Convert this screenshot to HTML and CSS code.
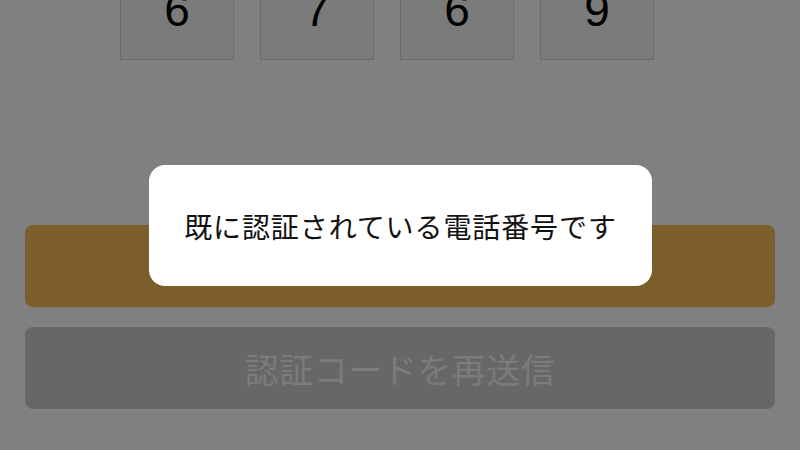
FILE: index.html
```html
<!DOCTYPE html>
<html lang="ja">
<head>
<meta charset="utf-8">
<link rel="stylesheet" href="styles.css">
</head>
<body>
<div class="screen">
  <div class="code-row">
    <div class="code-box">6</div>
    <div class="code-box">7</div>
    <div class="code-box">6</div>
    <div class="code-box">9</div>
  </div>
  <div class="actions">
    <div class="btn btn-primary"></div>
    <div class="btn btn-secondary">認証コードを再送信</div>
  </div>
  <div class="toast">既に認証されている電話番号です</div>
</div>
</body>
</html>
```
FILE: styles.css
```css
html, body {
  margin: 0;
  padding: 0;
  background: #808080;
}
.screen {
  position: relative;
  width: 800px;
  height: 450px;
  overflow: hidden;
  font-family: "Noto Sans CJK JP", "Noto Sans", sans-serif;
}
.code-row {
  display: flex;
  gap: 26px;
  padding-left: 120px;
  margin-top: -21px;
}
.code-box {
  width: 112px;
  height: 59px;
  padding-bottom: 20px;
  border: 1px solid #6c6c6c;
  background: #7b7b7b;
  display: flex;
  align-items: center;
  justify-content: center;
  font-family: "Liberation Sans", Arial, sans-serif;
  font-size: 46px;
  color: #000;
  line-height: 1;
}
.actions {
  display: flex;
  flex-direction: column;
  gap: 20px;
  margin: 165px 25px 0;
}
.btn {
  height: 82px;
  border-radius: 8px;
  display: flex;
  align-items: center;
  justify-content: center;
}
.btn-primary {
  background: #7c5e2b;
}
.btn-secondary {
  background: #676767;
  color: #7b7b7b;
  font-size: 34px;
  letter-spacing: 0.5px;
}
.toast {
  position: absolute;
  left: 149px;
  top: 165px;
  width: 503px;
  height: 121px;
  background: #fff;
  border-radius: 16px;
  display: flex;
  align-items: center;
  justify-content: center;
  font-size: 28px;
  color: #111;
  letter-spacing: 0.9px;
}
```
